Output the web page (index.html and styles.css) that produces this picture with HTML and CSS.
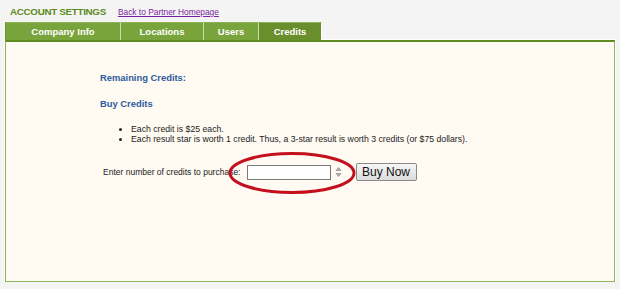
FILE: index.html
```html
<!DOCTYPE html>
<html lang="en">
<head>
    <meta charset="UTF-8">
    <title>Account Settings</title>
    <link rel="stylesheet" href="styles.css">
</head>
<body>
    <div class="page">
        <div class="header">
            <span class="header-title">ACCOUNT SETTINGS</span>
            <a class="header-link" href="#">Back to Partner Homepage</a>
        </div>

        <div class="tabs">
            <div class="tab tab-company">Company Info</div>
            <div class="tab tab-locations">Locations</div>
            <div class="tab tab-users">Users</div>
            <div class="tab tab-credits active">Credits</div>
        </div>

        <div class="panel">
            <div class="content">
                <h3 class="section-title">Remaining Credits:</h3>
                <h3 class="section-title">Buy Credits</h3>

                <ul class="notes">
                    <li>Each credit is $25 each.</li>
                    <li>Each result star is worth 1 credit. Thus, a 3-star result is worth 3 credits (or $75 dollars).</li>
                </ul>

                <div class="buy-row">
                    <label class="buy-label">Enter number of credits to purchase:</label>
                    <div class="amount">
                        <input type="text" class="amount-input">
                        <span class="spinner">
                            <svg width="7" height="12" viewBox="0 0 7 12">
                                <path d="M1 4.5 L3.5 1.5 L6 4.5 Z" fill="#b0b0b0" stroke="#999" stroke-width="0.8"/>
                                <path d="M1 7.5 L3.5 10.5 L6 7.5 Z" fill="#b0b0b0" stroke="#999" stroke-width="0.8"/>
                            </svg>
                        </span>
                        <!-- red highlight ring drawn over the field -->
                        <svg class="ring" width="130" height="44" viewBox="0 0 130 44">
                            <ellipse cx="65" cy="22" rx="62" ry="19.5" fill="none" stroke="#c4101c" stroke-width="3"/>
                        </svg>
                    </div>
                    <button class="buy-button">Buy Now</button>
                </div>
            </div>
        </div>
    </div>
</body>
</html>
```

FILE: styles.css
```css
body {
    margin: 0;
    background-color: #f4f4f4;
    font-family: "Liberation Sans", Arial, sans-serif;
    color: #222222;
}

.page {
    padding: 5px 5px 0 5px;
}

.header {
    display: flex;
    align-items: baseline;
    height: 17px;
    padding-left: 5px;
    padding-top: 1px;
    box-sizing: border-box;
}

.header-title {
    color: #5b8a1c;
    font-weight: bold;
    font-size: 9.8px;
    letter-spacing: -0.3px;
    margin-right: 12px;
}

.header-link {
    color: #7b1f9e;
    font-size: 8.4px;
}

.tabs {
    display: flex;
    height: 18px;
}

.tab {
    background-color: #79a33b;
    color: #ffffff;
    font-weight: bold;
    font-size: 9.5px;
    text-align: center;
    line-height: 18px;
    border-left: 1px solid #c8dca8;
    border-top: 1px solid #8eb458;
    box-sizing: border-box;
}

.tab-company {
    width: 115px;
    border-left: 1px solid #6a9630;
}

.tab-locations {
    width: 83px;
}

.tab-users {
    width: 55px;
}

.tab-credits {
    width: 64px;
}

.tab.active {
    background-color: #688f2c;
    border-right: 1px solid #ffffff;
}

.panel {
    height: 242px;
    background-color: #fffaf2;
    border: 1px solid #8db75a;
    border-top: 2px solid #5e8c22;
    box-sizing: border-box;
    box-shadow: 0 0 0 1px #ffffff;
}

.content {
    padding: 30px 0 0 94px;
}

.section-title {
    margin: 0 0 15px 0;
    color: #2b5c9e;
    font-size: 9.4px;
    font-weight: bold;
}

.notes {
    margin: 14px 0 19px 0;
    padding-left: 31px;
    font-size: 8.7px;
    line-height: 10px;
    list-style: disc;
}

.buy-row {
    display: flex;
    align-items: center;
    padding-left: 3px;
}

.buy-label {
    font-size: 8.5px;
    margin-right: 6px;
}

.amount {
    position: relative;
    display: flex;
    align-items: center;
}

.amount-input {
    width: 84px;
    height: 15px;
    box-sizing: border-box;
    border: 1px solid #7a7a7a;
    background-color: #ffffff;
    padding: 0;
}

.spinner {
    display: flex;
    margin: 0 14px 0 4px;
}

.ring {
    position: absolute;
    left: -20px;
    top: -14px;
}

.buy-button {
    width: 61px;
    height: 18px;
    padding: 0;
    font-family: "Liberation Sans", Arial, sans-serif;
    font-size: 12px;
    color: #111111;
    background: linear-gradient(#f6f6f6, #dcdcdc);
    border: 1px solid #8a8a8a;
    border-radius: 2px;
}
```
